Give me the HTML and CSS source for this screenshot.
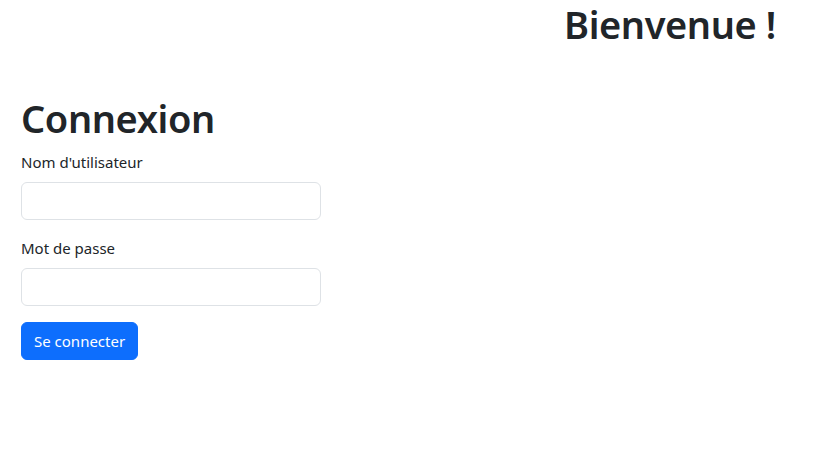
FILE: index.html
```html
<!DOCTYPE html>
<html lang="fr">
<head>
<meta charset="utf-8">
<title>Connexion</title>
<link rel="stylesheet" href="styles.css">
</head>
<body>
<header class="top">
  <h1 class="title">Bienvenue !</h1>
</header>
<main class="login">
  <h1 class="title">Connexion</h1>
  <form class="form">
    <div class="field">
      <label class="label" for="user">Nom d'utilisateur</label>
      <input class="input" id="user" type="text">
    </div>
    <div class="field">
      <label class="label" for="pass">Mot de passe</label>
      <input class="input" id="pass" type="password">
    </div>
    <button class="btn" type="button">Se connecter</button>
  </form>
</main>
</body>
</html>
```

FILE: styles.css
```css
* { box-sizing: border-box; }
body {
  margin: 0;
  font-family: "Noto Sans", "Open Sans", sans-serif;
  font-size: 15px;
  line-height: 24px;
  color: #212529;
  background: #fff;
}
.top {
  display: flex;
  justify-content: flex-end;
  padding-right: 58px;
}
.title {
  margin: 0 0 8px;
  font-size: 38px;
  font-weight: 600;
  line-height: 48px;
  letter-spacing: -0.4px;
}
.login {
  margin-top: 38px;
  padding-left: 21px;
}
.form {
  display: flex;
  flex-direction: column;
  align-items: flex-start;
}
.field {
  display: flex;
  flex-direction: column;
  margin-bottom: 16px;
}
.label {
  display: block;
  margin-bottom: 8px;
}
.input {
  width: 300px;
  height: 38px;
  padding: 6px 12px;
  font: inherit;
  border: 1px solid #dee2e6;
  border-radius: 6px;
  background: #fff;
}
.btn {
  height: 38px;
  padding: 6px 12px;
  font: inherit;
  color: #fff;
  background: #0d6efd;
  border: 1px solid #0d6efd;
  border-radius: 6px;
}
```
